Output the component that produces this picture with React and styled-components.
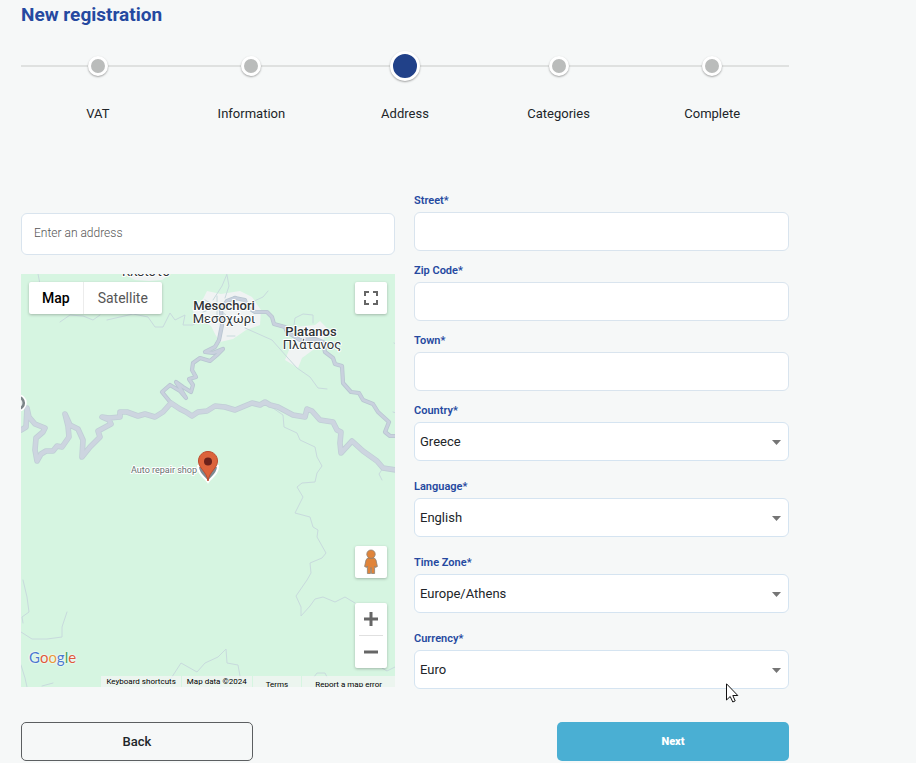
import React, { useState } from 'react';
import styled, { createGlobalStyle } from 'styled-components';

const GlobalStyle = createGlobalStyle`
  * {
    box-sizing: border-box;
  }

  body {
    margin: 0;
    background: #f6f8f8;
    color: #212529;
    font-family: Roboto, 'Liberation Sans', sans-serif;
    font-size: 13px;
  }

  button, input, select {
    font-family: inherit;
  }
`;

const Page = styled.main`
  max-width: 810px;
  padding: 0 21px 2px;
`;

const Title = styled.h1`
  margin: 0;
  padding-top: 3px;
  color: #2549a0;
  font-size: 19px;
  line-height: 24px;
  font-weight: 700;
`;

const Stepper = styled.ol`
  position: relative;
  display: flex;
  margin: 23px 0 0;
  padding: 0;
  list-style: none;

  /* line behind the dots */
  &::before {
    content: '';
    position: absolute;
    top: 15px;
    left: 0;
    right: 0;
    height: 2px;
    background: #dfe1e0;
  }
`;

const Step = styled.li`
  position: relative;
  flex: 1;
  display: flex;
  flex-direction: column;
  align-items: center;
  gap: 22px;
  line-height: 20px;
`;

const DotSlot = styled.div`
  display: flex;
  align-items: center;
  height: 32px;
`;

const Dot = styled.span`
  width: ${({ $active }) => ($active ? 30 : 20)}px;
  height: ${({ $active }) => ($active ? 30 : 20)}px;
  border: 3px solid #fff;
  border-radius: 50%;
  background: ${({ $active }) => ($active ? '#214189' : '#babcbb')};
  box-shadow: 0 1px 2px rgba(0, 0, 0, 0.35);
`;

const Columns = styled.div`
  display: grid;
  grid-template-columns: 374fr 375fr;
  gap: 19px;
  margin-top: 68px;

  @media (max-width: 600px) {
    grid-template-columns: 1fr;
  }
`;

const LocationColumn = styled.div`
  display: flex;
  flex-direction: column;
  gap: 19px;
  padding-top: 21px;
`;

const TextInput = styled.input`
  display: block;
  width: 100%;
  height: 39px;
  padding: 0 12px;
  border: 1px solid #d9e4ee;
  border-radius: 6px;
  background: #fff;
  color: #212529;
  font-size: 13px;
  outline: none;
`;

const SearchInput = styled(TextInput)`
  height: 42px;
  padding-bottom: 3px;
  font-size: 12px;
  font-weight: 300;

  &::placeholder {
    color: #555;
  }
`;

const MapBox = styled.div`
  position: relative;
  height: 413px;
  overflow: hidden;
  background: #d6f5e1;
`;

const MapDrawing = styled.svg`
  display: block;
  width: 100%;
  height: 100%;
`;

const MapTypes = styled.div`
  position: absolute;
  top: 8px;
  left: 8px;
  display: flex;
  border-radius: 2px;
  background: #fff;
  box-shadow: 0 1px 3px rgba(0, 0, 0, 0.25);
`;

const MapType = styled.button`
  height: 32px;
  padding: 0 ${({ $active }) => ($active ? 13 : 14)}px;
  border: none;
  border-left: ${({ $active }) => ($active ? 'none' : '1px solid #ececec')};
  background: none;
  color: ${({ $active }) => ($active ? '#000' : '#565656')};
  font-size: 14px;
  font-weight: ${({ $active }) => ($active ? 500 : 400)};
  cursor: pointer;
`;

const MapTools = styled.div`
  position: absolute;
  top: 8px;
  right: 8px;
  bottom: 19px;
  display: flex;
  flex-direction: column;
`;

const ToolGroup = styled.div`
  display: flex;
  flex-direction: column;
  align-items: center;
  width: 32px;
  margin-top: ${({ $push, $gap = 0 }) => ($push ? 'auto' : `${$gap}px`)};
  border-radius: 2px;
  background: #fff;
  box-shadow: 0 1px 3px rgba(0, 0, 0, 0.25);
`;

const ToolButton = styled.button`
  display: flex;
  align-items: center;
  justify-content: center;
  width: 32px;
  height: 32px;
  padding: 0;
  border: none;
  background: none;
  cursor: pointer;
`;

const ToolDivider = styled.span`
  width: 24px;
  height: 1px;
  background: #e0e0e0;
`;

const GoogleLogo = styled.a`
  position: absolute;
  left: 8px;
  bottom: 21px;
  font-family: Lato, sans-serif;
  font-size: 15px;
  line-height: 18px;
  text-decoration: none;
  text-shadow: 0 0 2px #fff, 0 0 2px #fff;
`;

const Letter = styled.span`
  color: ${({ $color }) => $color};
`;

const Attribution = styled.div`
  position: absolute;
  right: 0;
  bottom: 0;
  display: flex;
  gap: 1px;
  height: 11px;
  font-size: 8px;
  line-height: 11px;
  white-space: nowrap;
`;

const Credit = styled.div`
  padding: ${({ $low }) => ($low ? '3px 13px 0' : '0 5px')};
  background: rgba(245, 245, 245, 0.7);

  a, button, span {
    padding: 0;
    border: none;
    background: none;
    color: #000;
    font-size: 8px;
    line-height: 11px;
    text-decoration: none;
    display: block;
  }
`;

const Fields = styled.div`
  display: flex;
  flex-direction: column;
`;

const Field = styled.div`
  margin-bottom: ${({ $spaced }) => ($spaced ? 17 : 11)}px;

  &:last-child {
    margin-bottom: 0;
  }
`;

const Label = styled.label`
  display: block;
  margin-bottom: 2px;
  color: #2549a0;
  font-size: 11px;
  line-height: 18px;
  font-weight: 600;
`;

const SelectWrap = styled.div`
  position: relative;
`;

const Select = styled.select`
  appearance: none;
  display: block;
  width: 100%;
  height: 39px;
  padding: 0 28px 0 5px;
  border: 1px solid #d5e4f1;
  border-radius: 6px;
  background: #fff;
  color: #212529;
  font-size: 13px;
  outline: none;
`;

const Arrow = styled.svg`
  position: absolute;
  top: 18px;
  right: 8px;
  pointer-events: none;
`;

const Pointer = styled.svg`
  position: absolute;
  top: 33px;
  right: 50px;
  pointer-events: none;
`;

const Actions = styled.div`
  display: flex;
  justify-content: space-between;
  gap: 20px;
  margin-top: 33px;
`;

const Button = styled.button`
  flex: 0 1 232px;
  height: 39px;
  border: ${({ $primary }) => ($primary ? 'none' : '1px solid #5c5f61')};
  border-radius: 5px;
  background: ${({ $primary }) => ($primary ? '#4aafd3' : 'transparent')};
  color: ${({ $primary }) => ($primary ? '#fff' : '#212529')};
  font-size: ${({ $primary }) => ($primary ? 11 : 13)}px;
  font-weight: ${({ $primary }) => ($primary ? 900 : 500)};
  cursor: pointer;
`;

const STEPS = ['VAT', 'Information', 'Address', 'Categories', 'Complete'];

const TEXT_FIELDS = [
  { id: 'street', label: 'Street*' },
  { id: 'zip', label: 'Zip Code*' },
  { id: 'town', label: 'Town*' },
];

const SELECT_FIELDS = [
  { id: 'country', label: 'Country*', options: ['Greece', 'Cyprus'] },
  { id: 'language', label: 'Language*', options: ['English', 'Greek'] },
  { id: 'timezone', label: 'Time Zone*', options: ['Europe/Athens', 'Europe/London'] },
  { id: 'currency', label: 'Currency*', options: ['Euro', 'US Dollar'] },
];

const LOGO = [
  ['G', '#4b79cf'],
  ['o', '#dd5a3c'],
  ['o', '#e79a3c'],
  ['g', '#4b79cf'],
  ['l', '#3f9f5c'],
  ['e', '#dd5a3c'],
];

const MAIN_ROADS = [
  // west to east
  'M0 156L5 153L6 134L8 143L14 150L24 154L22 158L15 164L14 176L16 187L20 180L25 177L32 177L36 172L41 173L48 163L47 152L44 140L49 151L57 155L62 166L61 183L69 173L79 163L77 157L90 150L88 146L81 143L88 144L99 143L99 138L106 138L117 142L124 140L134 143L142 138L150 129L159 135L165 138L171 142L177 138L186 137L194 132L204 133L214 136L231 129L239 131L244 128L249 131L257 133L272 141L284 143L286 135L291 137L299 146L312 148L316 156L320 158L319 169L320 179L331 167L342 177L356 187L362 194L375 196',
];

const SIDE_ROADS = [
  // Mesochori down to the main road
  'M214 24L206 27L200 36L201 51L198 66L194 73L184 78L192 79L202 75L196 81L189 87L179 84L172 89L171 96L175 103L168 105L172 111L170 118L162 113L155 108L159 114L165 124L159 117L149 111L141 118L150 129',
  // Mesochori to Platanos and on to the south east
  'M214 24L224 26L226 33L234 38L246 38L251 43L253 50L264 53L266 58L279 66L294 65L302 68L304 78L312 84L314 90L321 92L322 109L330 118L338 119L342 126L352 130L357 138L368 148L364 158L369 162L375 162',
];

const PATHS = [
  'M249 132L262 141L263 153L276 159L279 166L294 173L296 183L301 192L296 199L294 208L281 209L276 213L282 223L274 239L289 243L292 253L297 256L296 263L305 279L301 284L289 289L290 299L286 306L275 322L280 333L280 342L289 332L294 325L302 323L314 328L324 323L334 329',
  'M361 394L366 397L374 393M293 403L296 399L304 399L306 403',
  'M2 306L6 323L8 338L1 343L2 349M0 358L11 365L26 365L41 363L41 353L46 338M0 391L4 404L6 413M21 412L32 409',
  'M149 406L160 389L176 398L184 389L197 383L205 375L206 389L217 391L219 402',
  'M17 0L19 10M39 48L49 41L62 42L72 46L79 41M86 46L112 40L127 43L134 53L142 53L149 39L154 46L164 41L162 51L172 51L178 46',
  'M224 54L251 66L266 83L276 94L289 103L297 114L306 115M273 51L274 44L282 40L292 41L292 49',
  'M231 28L242 23L247 17M206 0L201 12L192 26M206 1L208 12L204 24M184 26L198 34L212 31M182 38L196 33L208 44M196 22L196 48M206 62L214 62',
  'M372 138L375 139M356 189L362 194L358 200L361 206M373 69L375 70',
];

function MapArt() {
  return (
    <MapDrawing viewBox="0 0 374 413" preserveAspectRatio="xMidYMid slice" role="img" aria-label="Map">
      <g fill="#f0f3f3">
        <path d="M171 34L182 25L186 17L200 20L219 17L231 23L240 36L239 51L225 56L212 65L199 68L194 60L190 52L174 43Z" />
        <path d="M274 53L294 51L299 47L306 54L302 67L292 76L281 84L277 94L264 86L270 71Z" />
        <path d="M102 0L149 0L141 6L128 7L114 6Z" />
      </g>
      <g fill="none" strokeLinejoin="round" strokeLinecap="round">
        {PATHS.map((d) => (
          <path key={d} d={d} stroke="#c8dadd" strokeWidth="1" />
        ))}
        {SIDE_ROADS.map((d) => (
          <path key={d} d={d} stroke="#b8c6d1" strokeWidth="4.2" />
        ))}
        {MAIN_ROADS.map((d) => (
          <path key={d} d={d} stroke="#c0ced6" strokeWidth="5.6" />
        ))}
        {SIDE_ROADS.map((d) => (
          <path key={d} d={d} stroke="#c9d1de" strokeWidth="2.6" />
        ))}
        {MAIN_ROADS.map((d) => (
          <path key={d} d={d} stroke="#cdd5e0" strokeWidth="4" />
        ))}
      </g>
      <circle cx="-3" cy="129" r="7" fill="#fff" stroke="#fff" strokeWidth="3.5" />
      <circle cx="-3" cy="129" r="5.8" fill="#e9eded" stroke="#7c8588" strokeWidth="2.6" />
      <g
        textAnchor="middle"
        fontFamily="Roboto, 'Noto Sans', sans-serif"
        fontSize="13"
        fill="#2f3437"
        stroke="#fff"
        strokeWidth="2"
        strokeLinejoin="round"
        paintOrder="stroke"
      >
        <text x="125" y="2">Κλειστό</text>
        <text x="203" y="36" fontWeight="500">Mesochori</text>
        <text x="203" y="49">Μεσοχώρι</text>
        <text x="290" y="62" fontWeight="500">Platanos</text>
        <text x="291" y="75">Πλάτανος</text>
        <text x="143" y="199" fontSize="9" fill="#66706f">Auto repair shop</text>
      </g>
      {/* place marker under the pin */}
      <path d="M177 192C177 201 184 203 187 208C190 203 197 201 197 192Z" fill="#7c8a92" stroke="#fff" strokeWidth="2" />
      <path
        d="M187 177.500C181.500 177.500 177.500 181.800 177.500 187C177.500 194.500 185.500 197 187 207C188.500 197 196.500 194.500 196.500 187C196.500 181.800 192.500 177.500 187 177.500Z"
        fill="#dc633b"
        stroke="#bd4b2e"
        strokeWidth="1"
      />
      <circle cx="187" cy="187.500" r="4" fill="#6b211b" />
    </MapDrawing>
  );
}

function Map() {
  const [type, setType] = useState('Map');

  return (
    <MapBox>
      <MapArt />
      <MapTypes>
        {['Map', 'Satellite'].map((name) => (
          <MapType key={name} type="button" $active={type === name} onClick={() => setType(name)}>
            {name}
          </MapType>
        ))}
      </MapTypes>
      <MapTools>
        <ToolGroup>
          <ToolButton type="button" aria-label="Toggle fullscreen view">
            <svg width="14" height="14" viewBox="0 0 14 14" fill="none" stroke="#666" strokeWidth="2">
              <path d="M1 5V1H5M9 1H13V5M13 9V13H9M5 13H1V9" />
            </svg>
          </ToolButton>
        </ToolGroup>
        <ToolGroup $push>
          <ToolButton type="button" aria-label="Street View">
            <svg width="14" height="26" viewBox="0 0 14 26">
              <g fill="#e0843a" stroke="#8d8175" strokeWidth="0.8" strokeLinejoin="round">
                <path d="M3.600 9H10.400L12 11L13.400 17.500L11.400 18.400L10.600 17V24.500H7.500L7 18.500L6.500 24.500H3.400V17L2.600 18.400L0.600 17.500L2 11Z" />
                <circle cx="7" cy="5.200" r="4.200" />
              </g>
            </svg>
          </ToolButton>
        </ToolGroup>
        <ToolGroup $gap={25}>
          <ToolButton type="button" aria-label="Zoom in">
            <svg width="14" height="14" viewBox="0 0 14 14" stroke="#666" strokeWidth="3">
              <path d="M0 7H14M7 0V14" />
            </svg>
          </ToolButton>
          <ToolDivider />
          <ToolButton type="button" aria-label="Zoom out">
            <svg width="14" height="14" viewBox="0 0 14 14" stroke="#666" strokeWidth="3">
              <path d="M0 7H14" />
            </svg>
          </ToolButton>
        </ToolGroup>
      </MapTools>
      <GoogleLogo href="#google">
        {LOGO.map(([char, color], i) => (
          <Letter key={i} $color={color}>{char}</Letter>
        ))}
      </GoogleLogo>
      <Attribution>
        <Credit><button type="button">Keyboard shortcuts</button></Credit>
        <Credit><span>Map data ©2024</span></Credit>
        <Credit $low><a href="#terms">Terms</a></Credit>
        <Credit $low><a href="#report">Report a map error</a></Credit>
      </Attribution>
    </MapBox>
  );
}

export default function App() {
  const activeStep = 2;

  return (
    <>
      <GlobalStyle />
      <Page>
        <Title>New registration</Title>

        <Stepper>
          {STEPS.map((step, i) => (
            <Step key={step} aria-current={i === activeStep ? 'step' : undefined}>
              <DotSlot>
                <Dot $active={i === activeStep} />
              </DotSlot>
              {step}
            </Step>
          ))}
        </Stepper>

        <form onSubmit={(e) => e.preventDefault()}>
          <Columns>
            <LocationColumn>
              <SearchInput type="text" placeholder="Enter an address" aria-label="Enter an address" />
              <Map />
            </LocationColumn>

            <Fields>
              {TEXT_FIELDS.map(({ id, label }) => (
                <Field key={id}>
                  <Label htmlFor={id}>{label}</Label>
                  <TextInput id={id} type="text" />
                </Field>
              ))}
              {SELECT_FIELDS.map(({ id, label, options }) => (
                <Field key={id} $spaced>
                  <Label htmlFor={id}>{label}</Label>
                  <SelectWrap>
                    <Select id={id}>
                      {options.map((option) => (
                        <option key={option}>{option}</option>
                      ))}
                    </Select>
                    <Arrow width="9" height="5" viewBox="0 0 9 5" aria-hidden="true">
                      <path d="M0 0H9L4.500 5Z" fill="#757575" />
                    </Arrow>
                    {id === 'currency' && (
                      <Pointer width="13" height="20" viewBox="0 0 13 20" aria-hidden="true">
                        <path
                          d="M0.500 0.800V17L4.200 13.500L6.800 19L9.200 17.900L6.800 12.500H11.800Z"
                          fill="#fff"
                          stroke="#111"
                          strokeWidth="1"
                        />
                      </Pointer>
                    )}
                  </SelectWrap>
                </Field>
              ))}
            </Fields>
          </Columns>

          <Actions>
            <Button type="button">Back</Button>
            <Button type="submit" $primary>Next</Button>
          </Actions>
        </form>
      </Page>
    </>
  );
}
